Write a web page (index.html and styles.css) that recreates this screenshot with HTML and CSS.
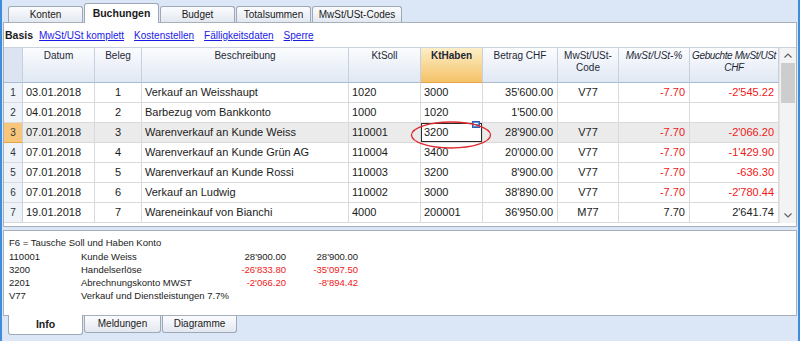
FILE: index.html
```html
<!DOCTYPE html>
<html lang="de">
<head>
    <meta charset="UTF-8">
    <meta name="viewport" content="width=device-width, initial-scale=1.0">
    <title>Buchungen</title>
    <link rel="stylesheet" href="styles.css">
</head>
<body>
<div class="window">
    <!-- Table tabs -->
    <div class="tabs top">
        <div class="tab">Konten</div>
        <div class="tab active">Buchungen</div>
        <div class="tab">Budget</div>
        <div class="tab">Totalsummen</div>
        <div class="tab wide">MwSt/USt-Codes</div>
    </div>

    <div class="panel">
        <div class="views">
            <span class="view-current">Basis</span>
            <a href="#">MwSt/USt komplett</a>
            <a href="#">Kostenstellen</a>
            <a href="#">Fälligkeitsdaten</a>
            <a href="#">Sperre</a>
        </div>

        <div class="table-wrap">
            <div class="sheet">
                <div class="row head">
                    <div class="cell corner"></div>
                    <div class="cell">Datum</div>
                    <div class="cell">Beleg</div>
                    <div class="cell">Beschreibung</div>
                    <div class="cell">KtSoll</div>
                    <div class="cell focus">KtHaben</div>
                    <div class="cell">Betrag CHF</div>
                    <div class="cell">MwSt/USt-<br>Code</div>
                    <div class="cell it">MwSt/USt-%</div>
                    <div class="cell it tight">Gebuchte MwSt/USt<br>CHF</div>
                </div>
                <div class="row">
                    <div class="cell nr">1</div>
                    <div class="cell">03.01.2018</div>
                    <div class="cell c">1</div>
                    <div class="cell">Verkauf an Weisshaupt</div>
                    <div class="cell">1020</div>
                    <div class="cell">3000</div>
                    <div class="cell r">35'600.00</div>
                    <div class="cell c">V77</div>
                    <div class="cell r neg">-7.70</div>
                    <div class="cell r neg">-2'545.22</div>
                </div>
                <div class="row">
                    <div class="cell nr">2</div>
                    <div class="cell">04.01.2018</div>
                    <div class="cell c">2</div>
                    <div class="cell">Barbezug vom Bankkonto</div>
                    <div class="cell">1000</div>
                    <div class="cell">1020</div>
                    <div class="cell r">1'500.00</div>
                    <div class="cell c"></div>
                    <div class="cell r"></div>
                    <div class="cell r"></div>
                </div>
                <div class="row current">
                    <div class="cell nr">3</div>
                    <div class="cell">07.01.2018</div>
                    <div class="cell c">3</div>
                    <div class="cell">Warenverkauf an Kunde Weiss</div>
                    <div class="cell">110001</div>
                    <div class="cell sel">3200
                        <svg class="cell-icon" width="8" height="7" viewBox="0 0 8 7">
                            <rect x="0.5" y="0.5" width="7" height="6" fill="#5b8fd6" stroke="#2f5fa8"/>
                            <path d="M2 2.5h4M2 4.5h3" stroke="#fff" stroke-width="1"/>
                        </svg>
                    </div>
                    <div class="cell r">28'900.00</div>
                    <div class="cell c">V77</div>
                    <div class="cell r neg">-7.70</div>
                    <div class="cell r neg">-2'066.20</div>
                </div>
                <div class="row">
                    <div class="cell nr">4</div>
                    <div class="cell">07.01.2018</div>
                    <div class="cell c">4</div>
                    <div class="cell">Warenverkauf an Kunde Grün AG</div>
                    <div class="cell">110004</div>
                    <div class="cell">3400</div>
                    <div class="cell r">20'000.00</div>
                    <div class="cell c">V77</div>
                    <div class="cell r neg">-7.70</div>
                    <div class="cell r neg">-1'429.90</div>
                </div>
                <div class="row">
                    <div class="cell nr">5</div>
                    <div class="cell">07.01.2018</div>
                    <div class="cell c">5</div>
                    <div class="cell">Warenverkauf an Kunde Rossi</div>
                    <div class="cell">110003</div>
                    <div class="cell">3200</div>
                    <div class="cell r">8'900.00</div>
                    <div class="cell c">V77</div>
                    <div class="cell r neg">-7.70</div>
                    <div class="cell r neg">-636.30</div>
                </div>
                <div class="row">
                    <div class="cell nr">6</div>
                    <div class="cell">07.01.2018</div>
                    <div class="cell c">6</div>
                    <div class="cell">Verkauf an Ludwig</div>
                    <div class="cell">110002</div>
                    <div class="cell">3000</div>
                    <div class="cell r">38'890.00</div>
                    <div class="cell c">V77</div>
                    <div class="cell r neg">-7.70</div>
                    <div class="cell r neg">-2'780.44</div>
                </div>
                <div class="row">
                    <div class="cell nr">7</div>
                    <div class="cell">19.01.2018</div>
                    <div class="cell c">7</div>
                    <div class="cell">Wareneinkauf von Bianchi</div>
                    <div class="cell">4000</div>
                    <div class="cell">200001</div>
                    <div class="cell r">36'950.00</div>
                    <div class="cell c">M77</div>
                    <div class="cell r">7.70</div>
                    <div class="cell r">2'641.74</div>
                </div>
            </div>

            <div class="scrollbar">
                <div class="arrow">
                    <svg width="8" height="5" viewBox="0 0 8 5"><path d="M0.5 4.5L4 1L7.5 4.5" fill="none" stroke="#606060" stroke-width="1.2"/></svg>
                </div>
                <div class="thumb"></div>
                <div class="track"></div>
                <div class="arrow">
                    <svg width="8" height="5" viewBox="0 0 8 5"><path d="M0.5 0.5L4 4L7.5 0.5" fill="none" stroke="#606060" stroke-width="1.2"/></svg>
                </div>
            </div>

            <!-- red annotation round the edited cell -->
            <svg class="marker" width="84" height="30" viewBox="0 0 84 30">
                <ellipse cx="42" cy="15" rx="39.5" ry="13" fill="none" stroke="#e0282c" stroke-width="1.3"/>
            </svg>
        </div>
    </div>

    <div class="info">
        <div class="hint">F6 = Tausche Soll und Haben Konto</div>
        <div class="accounts">
            <span>110001</span><span>Kunde Weiss</span><span class="r">28'900.00</span><span class="r">28'900.00</span>
            <span>3200</span><span>Handelserlöse</span><span class="r neg">-26'833.80</span><span class="r neg">-35'097.50</span>
            <span>2201</span><span>Abrechnungskonto MWST</span><span class="r neg">-2'066.20</span><span class="r neg">-8'894.42</span>
            <span>V77</span><span class="span">Verkauf und Dienstleistungen 7.7%</span>
        </div>
    </div>

    <div class="tabs bottom">
        <div class="tab active">Info</div>
        <div class="tab mid">Meldungen</div>
        <div class="tab">Diagramme</div>
    </div>
</div>
</body>
</html>
```

FILE: styles.css
```css
body {
    margin: 0;
    font-family: "Liberation Sans", Arial, sans-serif;
    font-size: 11px;
    color: #1b1b1b;
    background-color: #dbe6f7;
}
.window {
    height: 341px;
    box-sizing: border-box;
    border-left: 2px solid #3d8ddc;
    border-right: 2px solid #3d8ddc;
    padding: 0 1px;
    overflow: hidden;
}

/* tabs (top and bottom) */
.tabs {
    display: flex;
    gap: 1px;
    padding-left: 5px;
}
.tabs.top {
    height: 22px;
    align-items: flex-end;
}
.tab {
    width: 75px;
    height: 16px;
    box-sizing: border-box;
    border: 1px solid #9ea8b6;
    background: linear-gradient(#fbfcfe, #e3e8f0);
    font-size: 10px;
    line-height: 15px;
    text-align: center;
    color: #1b1b1b;
}
.tab.wide {
    width: 90px;
}
.tab.mid {
    width: 77px;
}
.tab.active {
    background: #fff;
    font-weight: bold;
    font-size: 10.5px;
    position: relative;
    z-index: 1;
}
.top .tab {
    border-bottom: none;
    border-radius: 3px 3px 0 0;
}
.top .tab.active {
    height: 20px;
    margin-bottom: -1px;
    line-height: 18px;
}
.tabs.bottom {
    align-items: flex-start;
}
.bottom .tab {
    height: 17px;
    border-top: none;
    border-radius: 0 0 3px 3px;
}
.bottom .tab.active {
    height: 20px;
    margin-top: -1px;
    line-height: 19px;
}

/* main table panel */
.panel {
    height: 205px;
    box-sizing: border-box;
    border: 1px solid #a7afba;
    background: #fff;
}
.views {
    height: 24px;
    display: flex;
    align-items: center;
    gap: 10px;
    padding-left: 1px;
    font-size: 10px;
}
.views a {
    color: #1a1ae6;
}
.view-current {
    font-weight: bold;
    font-size: 10.5px;
    margin-right: -4px;
}
.table-wrap {
    position: relative;
    display: flex;
    border-top: 1px solid #c9d2de;
}
.sheet {
    width: 775px;
}
.row {
    display: grid;
    grid-template-columns: 19px 72px 47px 207px 72px 62px 75px 61px 71px 89px;
    height: 20px;
}
.cell {
    box-sizing: border-box;
    border-right: 1px solid #dadada;
    border-bottom: 1px solid #dadada;
    padding: 0 3px;
    line-height: 19px;
    white-space: nowrap;
    overflow: hidden;
}
.cell.c {
    text-align: center;
}
.cell.r {
    text-align: right;
    padding-right: 4px;
}
.neg {
    color: #f01818;
}
.cell.nr {
    padding: 0;
    text-align: center;
    font-size: 10px;
    color: #333;
    background: #eef3fa;
    border-right-color: #c6d3e4;
}

.row.head {
    height: 35px;
}
.head .cell {
    background: linear-gradient(#fbfcfe, #e0e8f3);
    border-right-color: #c5d1e1;
    border-bottom-color: #a9bbd3;
    text-align: center;
    white-space: normal;
    font-size: 10px;
    line-height: 12px;
    padding-top: 2px;
    color: #1e2836;
}
.head .corner {
    background: #dbe4f0;
}
.head .focus {
    background: linear-gradient(#fdeec8, #f4c267);
    border-bottom-color: #e2a548;
    font-weight: bold;
}
.head .it {
    font-style: italic;
}
.head .tight {
    white-space: nowrap;
    letter-spacing: -0.4px;
    padding: 2px 0 0;
}

.row.current {
    background: #ebebeb;
}
.current .nr {
    background: #f7c67a;
    border-bottom-color: #e4a447;
}
.cell.sel {
    position: relative;
    overflow: visible;
    background: #fff;
    box-shadow: inset 0 0 0 1px #2a2a2a;
}
.cell-icon {
    position: absolute;
    right: 2px;
    top: -2px;
}

.scrollbar {
    flex: 1;
    display: flex;
    flex-direction: column;
    background: #f3f3f3;
    border-left: 1px solid #e4e4e4;
}
.arrow {
    height: 15px;
    display: flex;
    align-items: center;
    justify-content: center;
}
.thumb {
    height: 40px;
    margin: 0 1px;
    background: #cdcdcd;
}
.track {
    flex: 1;
}
.marker {
    position: absolute;
    left: 405px;
    top: 72px;
}

/* info panel */
.info {
    margin-top: 3px;
    height: 86px;
    box-sizing: border-box;
    border: 1px solid #a7afba;
    background: #fff;
    padding: 5px 0 0 5px;
    font-size: 9.5px;
    line-height: 13px;
}
.hint {
    margin-bottom: 1px;
}
.accounts {
    display: grid;
    grid-template-columns: 72px 130px 75px 72px;
}
.accounts .r {
    text-align: right;
}
.accounts .span {
    grid-column: 2 / 5;
}
```
